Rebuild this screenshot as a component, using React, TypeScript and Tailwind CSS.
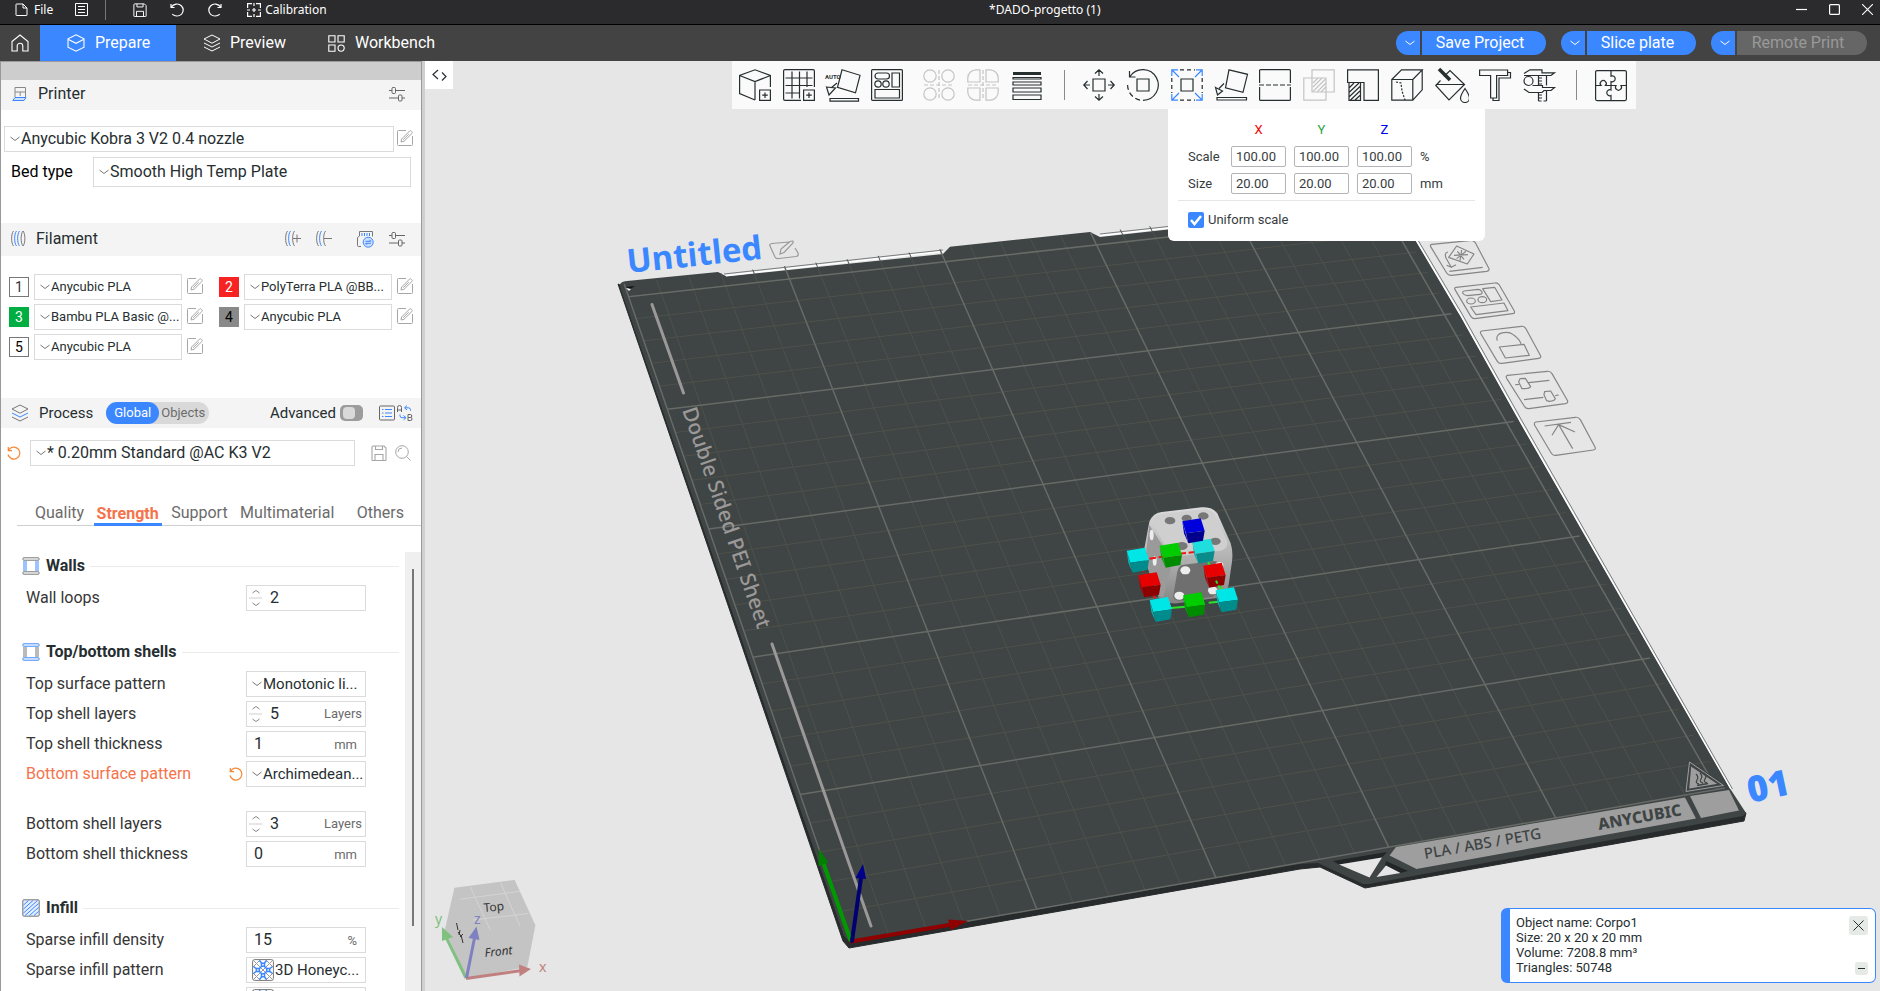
import type { ReactNode } from "react";
import clsx from "clsx";

type Point = [number, number];

type Filament = {
  slot: number;
  preset: string;
  chip: string;
};

const FILAMENTS: Filament[] = [
  { slot: 1, preset: "Anycubic PLA", chip: "border border-[#777] bg-white text-[#333]" },
  { slot: 2, preset: "PolyTerra PLA @BB...", chip: "bg-[#f72323] text-white" },
  { slot: 3, preset: "Bambu PLA Basic @...", chip: "bg-[#00ae42] text-white" },
  { slot: 4, preset: "Anycubic PLA", chip: "bg-[#898989] text-black" },
  { slot: 5, preset: "Anycubic PLA", chip: "border border-[#777] bg-white text-black" },
];

const SETTING_TABS = [
  { name: "Quality", pad: "ml-[10px]" },
  { name: "Strength", pad: "" },
  { name: "Support", pad: "" },
  { name: "Multimaterial", pad: "" },
  { name: "Others", pad: "ml-[10px]" },
];

/* ---------- icons ---------- */

function Icon({
  size = 16,
  box = 16,
  className,
  children,
}: {
  size?: number;
  box?: number;
  className?: string;
  children: ReactNode;
}) {
  return (
    <svg
      width={size}
      height={size}
      viewBox={`0 0 ${box} ${box}`}
      fill="none"
      stroke="currentColor"
      strokeWidth={1}
      className={clsx("shrink-0", className)}
      aria-hidden="true"
    >
      {children}
    </svg>
  );
}

const EditIcon = ({ size = 16 }: { size?: number }) => (
  <Icon size={size} className="text-[#a6a6a6]">
    <path d="M9 .5H1.5a1 1 0 0 0-1 1v13a1 1 0 0 0 1 1h13a1 1 0 0 0 1-1V6" />
    <path d="M4 12l.6-3L12.500 1.100c.5-.5 1.200-.5 1.700 0l.7.700c.5.500.5 1.200 0 1.700L7 11.300zM6.200 9.700l5.600-5.600" />
  </Icon>
);

const ChevronDown = ({ className }: { className?: string }) => (
  <svg width="10" height="6" viewBox="0 0 10 6" fill="none" stroke="currentColor" className={className} aria-hidden="true">
    <path d="M.5 1L5 4.500 9.500 1" />
  </svg>
);

const ResetIcon = () => (
  <Icon size={14} box={14} className="text-[#f58634]">
    <path strokeWidth={1.2} d="M1.300 1v3.600H5M1.500 4.300A6 6 0 1 1 1 8.500" />
  </Icon>
);

const UndoIcon = () => (
  <Icon size={14} box={14}>
    <path strokeWidth={1.2} d="M1 1v3.500h3.500M1.200 4.300C3.500.6 8.500-.2 11.500 3c3.200 3.500 1.500 9.500-4.300 10-2 .1-3.700-.6-4.900-1.900" />
  </Icon>
);

const RedoIcon = () => (
  <Icon size={14} box={14}>
    <path strokeWidth={1.2} d="M13 1v3.500H9.500M12.800 4.300C10.500.6 5.500-.2 2.500 3c-3.200 3.500-1.500 9.500 4.300 10 2 .1 3.700-.6 4.900-1.900" />
  </Icon>
);

const SaveIcon = ({ size = 14 }: { size?: number }) => (
  <Icon size={size}>
    <path strokeWidth={1.1} d="M1 15V2a1 1 0 0 1 1-1h11l2 2v12a.5.5 0 0 1-.5.5h-13A.5.5 0 0 1 1 15zM4.500 1v3.500h7V1M4 15.500V9.500h8v6" />
  </Icon>
);

const SlidersIcon = () => (
  <Icon className="text-[#666]">
    <path d="M0 4.500h3M6.500 4.500H16M0 12h9.500M13 12h3" />
    <rect x="3" y="1.500" width="3.500" height="6" rx="1" />
    <rect x="9.500" y="9" width="3.500" height="6" rx="1" />
  </Icon>
);

const LayersIcon = ({ size = 18, accent }: { size?: number; accent?: boolean }) => (
  <Icon size={size} box={18}>
    <path d="M9 1l8 4-8 4.200L1 5z" />
    <path stroke={accent ? "#3b87ff" : "currentColor"} d="M1 9l8 4 8-4" />
    <path d="M1 13l8 4 8-4" />
  </Icon>
);

const SpoolRings = ({ children }: { children?: ReactNode }) => (
  <Icon size={17} box={17} className="text-[#777]">
    <path d="M3.500 1C1 4 1 13 3.500 16" />
    <path stroke="#3b87ff" d="M6.500 1C4 4 4 13 6.500 16" />
    {children}
  </Icon>
);

const WallIcon = ({ caps, sides }: { caps: string; sides: string }) => (
  <Icon size={18} box={18}>
    <g stroke={caps}>
      <rect x="1" y=".8" width="16" height="2.400" rx=".5" />
      <rect x="1" y="14.800" width="16" height="2.400" rx=".5" />
    </g>
    <path stroke={sides} strokeDasharray="1 1" strokeWidth={4} d="M3 4.500v9.500M15 4.500v9.500" />
  </Icon>
);

const HatchIcon = () => (
  <Icon size={18} box={18}>
    <rect x=".8" y=".8" width="16.400" height="16.400" rx="1" fill="#e2edff" stroke="#777" />
    <path stroke="#3b87ff" d="M1.500 6l5-4.500M1.500 10L11 1.500M1.500 14L15.500 1.500M3 16.500l13.500-12M7.500 16.500l9-8M12 16.500l4.500-4" />
  </Icon>
);

const HoneycombIcon = ({ className }: { className?: string }) => (
  <svg width="22" height="22" viewBox="0 0 22 22" fill="none" className={className} aria-hidden="true">
    <rect x=".6" y=".6" width="20.800" height="20.800" rx="2" fill="#fff" stroke="#777" />
    <path stroke="#999" d="M1 1l20 20M21 1L1 21M1 8l7-7M14 1l7 7M1 14l7 7M21 14l-7 7" />
    <g stroke="#3b87ff" strokeWidth="1.500" fill="#fff">
      <path d="M9.500 4.300h3v3h-3zM9.500 14.700h3v3h-3zM4.300 9.500h3v3h-3zM14.700 9.500h3v3h-3z" />
      <path d="M7.500 1.500l2 2.500M14.500 1.500l-2 2.500M7.500 20.500l2-2.500M14.500 20.500l-2-2.500M1.500 7.500l2.500 2M1.500 14.500l2.500-2M20.500 7.500l-2.500 2M20.500 14.500l-2.500-2M7.500 9.500l2-2M14.500 9.500l-2-2M7.500 12.500l2 2M14.500 12.500l-2 2" />
    </g>
  </svg>
);

/* ---------- header ---------- */

function TitleBar() {
  return (
    <div className="flex h-[25px] shrink-0 items-center border-b border-black bg-[#2b2b2d] pb-[5px] pl-[15px] font-['Noto_Sans',sans-serif] text-[12px] text-white">
      <button type="button" className="flex items-center gap-[6px]">
        <Icon size={13} box={13}>
          <path d="M1 1.500a.5.5 0 0 1 .5-.5H8l4 4v7a.5.5 0 0 1-.5.5h-10A.5.5 0 0 1 1 12zM8 1v4h4" />
        </Icon>
        File
      </button>
      <button type="button" aria-label="Menu" className="ml-[22px]">
        <Icon size={13} box={13}>
          <path d="M.5.5h12v12H.5zM3 3.500h7M3 6.500h7M3 9.500h7" />
        </Icon>
      </button>
      <span className="ml-[17px] h-[20px] w-px bg-[#777]" />
      <button type="button" aria-label="Save" className="ml-[27px]">
        <SaveIcon />
      </button>
      <button type="button" aria-label="Undo" className="ml-[23px]">
        <UndoIcon />
      </button>
      <button type="button" aria-label="Redo" className="ml-[24px]">
        <RedoIcon />
      </button>
      <button type="button" className="ml-[25px] flex items-center gap-[4px]">
        <Icon size={14} box={14}>
          <path strokeWidth={1.2} d="M.6 5V.6H5M9 .6h4.400V5M13.400 9v4.400H9M5 13.400H.6V9M7 0v3M7 11v3M0 7h3M11 7h3M7 5v4M5 7h4" />
        </Icon>
        Calibration
      </button>
      <span className="flex-1 text-center">*DADO-progetto (1)</span>
      <div className="flex w-[117px] justify-end gap-[22px] pr-[7px]">
        <button type="button" aria-label="Minimise">
          <Icon size={11} box={11}>
            <path strokeWidth={1.2} d="M0 5.500h11" />
          </Icon>
        </button>
        <button type="button" aria-label="Maximise">
          <Icon size={11} box={11}>
            <rect x=".6" y=".6" width="9.800" height="9.800" rx="1" strokeWidth={1.2} />
          </Icon>
        </button>
        <button type="button" aria-label="Close">
          <Icon size={11} box={11}>
            <path strokeWidth={1.1} d="M0 0l11 11M11 0L0 11" />
          </Icon>
        </button>
      </div>
    </div>
  );
}

function SplitButton({ label, width, disabled }: { label: string; width: string; disabled?: boolean }) {
  return (
    <div className="flex gap-[2px]">
      <button
        type="button"
        aria-label={`${label} options`}
        className="flex h-6 w-6 items-center justify-center rounded-l-full bg-[#3b87ff] pl-1 text-white"
      >
        <ChevronDown />
      </button>
      <button
        type="button"
        disabled={disabled}
        className={clsx(
          "flex h-6 items-center justify-center rounded-r-full pr-2",
          width,
          disabled ? "bg-[#666] text-[#999]" : "bg-[#3b87ff] text-white"
        )}
      >
        {label}
      </button>
    </div>
  );
}

function NavBar() {
  return (
    <nav className="flex h-9 shrink-0 items-center bg-[#434343] pr-[13px] text-[16px] text-white">
      <button type="button" aria-label="Home" className="flex h-9 w-10 items-center justify-center">
        <Icon size={18} box={18}>
          <path strokeWidth={1.1} d="M1 7.500L9 1l8 6.500V17h-5.200v-5a2.800 2.800 0 0 0-5.600 0v5H1z" />
        </Icon>
      </button>
      <button type="button" className="flex h-9 w-[136px] items-center gap-[10px] bg-[#3b87ff] pl-[27px]">
        <Icon size={18} box={18}>
          <path strokeWidth={1.1} d="M9 .8l8 4v8.400l-8 4-8-4V4.800zM1 5.300l8 4 8-4" />
        </Icon>
        Prepare
      </button>
      <button type="button" className="flex h-9 w-[136px] items-center gap-[9px] pl-[27px]">
        <LayersIcon />
        Preview
      </button>
      <button type="button" className="flex h-9 items-center gap-[10px] pl-[16px]">
        <Icon size={17} box={17}>
          <path strokeWidth={1.1} d="M.8.8H7V7H.8zM10 .8h6.200V7H10zM.8 10H7v6.200H.8z" />
          <circle cx="13.100" cy="13.100" r="3.100" strokeWidth={1.1} />
        </Icon>
        Workbench
      </button>
      <div className="ml-auto flex gap-[15px]">
        <SplitButton label="Save Project" width="w-[124px]" />
        <SplitButton label="Slice plate" width="w-[109px]" />
        <SplitButton label="Remote Print" width="w-[130px]" disabled />
      </div>
    </nav>
  );
}

/* ---------- sidebar ---------- */

function Dropdown({ label, value, className, icon }: { label: string; value: string; className?: string; icon?: ReactNode }) {
  return (
    <div className={clsx("relative", className)}>
      <select
        aria-label={label}
        defaultValue={value}
        className={clsx(
          "h-full w-full appearance-none overflow-hidden border border-[#dbdbdb] bg-white text-[#262e30] outline-none",
          icon ? "pl-[28px]" : "pl-4"
        )}
      >
        <option value={value}>{value}</option>
      </select>
      <span className="pointer-events-none absolute inset-y-0 left-[6px] flex items-center text-[#777]">
        {icon ?? <ChevronDown />}
      </span>
    </div>
  );
}

function EditButton({ label }: { label: string }) {
  return (
    <button type="button" aria-label={`Edit ${label}`} className="pb-[2px]">
      <EditIcon />
    </button>
  );
}

function PrinterPanel() {
  return (
    <section>
      <header className="flex h-[30px] items-center bg-[#f4f4f4] pr-4 pb-[2px] pl-[11px] text-[16px] text-[#262e30]">
        <Icon className="text-[#888]">
          <path d="M3 11V1.500h10.500V11M3 6h10.500M8.200 6v4" />
          <path stroke="#3b87ff" fill="#cfe0ff" d="M3 11.500h11l-2 3H.8z" />
        </Icon>
        <h2 className="ml-[10px] flex-1">Printer</h2>
        <button type="button" aria-label="Printer settings">
          <SlidersIcon />
        </button>
      </header>
      <div className="flex h-[113px] flex-col gap-[5px] pt-4 pl-[3px]">
        <div className="flex items-center gap-[3px]">
          <Dropdown label="Printer preset" value="Anycubic Kobra 3 V2 0.4 nozzle" className="h-[26px] w-[390px] text-[16px]" />
          <EditButton label="printer" />
        </div>
        <div className="flex items-center pl-[7px]">
          <span className="w-[82px] text-[16px] text-black">Bed type</span>
          <Dropdown label="Bed type" value="Smooth High Temp Plate" className="h-[30px] w-[318px] text-[16px]" />
        </div>
      </div>
    </section>
  );
}

function FilamentPanel() {
  return (
    <section>
      <header className="flex h-[33px] items-center bg-[#f4f4f4] pr-4 pb-[2px] pl-[9px] text-[16px] text-[#262e30]">
        <SpoolRings>
          <path stroke="#3b87ff" d="M9.500 1C7 4 7 13 9.500 16" />
          <path d="M13 1c-2.500 3-2.500 12 0 15 2.500-3 2.500-12 0-15z" />
        </SpoolRings>
        <h2 className="ml-[9px] flex-1">Filament</h2>
        <button type="button" aria-label="Add filament">
          <SpoolRings>
            <path d="M10.500 1C8 4 8 13 10.500 16M9 8.500h8M13 4.500v8" />
          </SpoolRings>
        </button>
        <button type="button" aria-label="Remove filament" className="ml-[14px]">
          <SpoolRings>
            <path d="M10.500 1C8 4 8 13 10.500 16M9 8.500h8" />
          </SpoolRings>
        </button>
        <button type="button" aria-label="Sync filaments" className="ml-[24px]">
          <Icon size={18} box={18} className="text-[#777]">
            <path d="M5 16.500H2.500a1 1 0 0 1-1-1v-8l2-1.500V1.500h13v5" />
            <path stroke="#3b87ff" d="M6 3v3M8.500 3v3M11 3v3M13.500 3v3" />
            <circle cx="12.200" cy="12.200" r="5" stroke="#3b87ff" fill="#cfe0ff" />
            <path stroke="#3b87ff" d="M9.500 11.300h5.400l-1.500-1.500M14.900 13.300H9.500l1.500 1.500" />
          </Icon>
        </button>
        <button type="button" aria-label="Filament settings" className="ml-[15px]">
          <SlidersIcon />
        </button>
      </header>
      <ul className="grid h-[142px] grid-cols-[210px_210px] content-start gap-y-1 pt-[18px] pl-2">
        {FILAMENTS.map((item) => (
          <li key={item.slot} className="flex w-[204px] items-center text-[13px]">
            <span className={clsx("flex h-5 w-5 items-center justify-center text-[14px]", item.chip)}>{item.slot}</span>
            <Dropdown label={`Filament ${item.slot}`} value={item.preset} className="mr-[5px] ml-[5px] h-[26px] w-[148px]" />
            <EditButton label={`filament ${item.slot}`} />
          </li>
        ))}
      </ul>
    </section>
  );
}

function ProcessPanel() {
  return (
    <section>
      <header className="flex h-[30px] items-center bg-[#f4f4f4] pr-2 pl-[10px] text-[15px] text-[#262e30]">
        <span className="text-[#777]">
          <LayersIcon accent />
        </span>
        <h2 className="ml-[10px]">Process</h2>
        <div className="ml-[13px] flex h-[22px] w-[103px] rounded-full bg-[#d9d9d9] text-[14px]">
          <button type="button" className="w-[53px] rounded-full bg-[#3b87ff] text-[13px] text-white">
            Global
          </button>
          <button type="button" className="w-[48px] text-[13px] text-[#6b6b6b]">
            Objects
          </button>
        </div>
        <label htmlFor="advanced" className="ml-auto">
          Advanced
        </label>
        <span className="relative ml-1 flex h-4 w-[23px] items-center">
          <input id="advanced" type="checkbox" role="switch" className="h-4 w-[23px] appearance-none rounded-[5px] bg-[#9c9c9c]" />
          <span className="pointer-events-none absolute left-[3px] h-3 w-3 rounded-[4px] bg-[#d9d9d9]" />
        </span>
        <button type="button" aria-label="Process table" className="ml-4">
          <Icon className="text-[#666]">
            <rect x=".5" y="1" width="15" height="14" rx="1" />
            <path stroke="#3b87ff" d="M3 4.500h1.500M6 4.500h7M3 8h1.500M6 8h7M3 11.500h1.500M6 11.500h7" />
          </Icon>
        </button>
        <button type="button" aria-label="Compare presets" className="ml-[2px]">
          <Icon className="text-[#666]">
            <path d="M.5 7V2.500a2 2 0 0 1 4 0V7M.5 5h4M11 9.500v6h2.500a1.500 1.500 0 0 0 0-3H11h2.300a1.500 1.500 0 0 0 0-3z" />
            <path stroke="#3b87ff" d="M10 .5L7.500 2.800 10 5M8 2.800h3.500a2 2 0 0 1 2 2v1M6.500 10.500L9 12.700l-2.500 2.200M8.500 12.700H5a2 2 0 0 1-2-2V9.500" />
          </Icon>
        </button>
      </header>

      <div className="flex items-center pt-3 pl-[6px]">
        <button type="button" aria-label="Reset process preset">
          <ResetIcon />
        </button>
        <Dropdown label="Process preset" value="* 0.20mm Standard @AC K3 V2" className="ml-[9px] h-[26px] w-[325px] text-[16px]" />
        <button type="button" aria-label="Save preset" className="ml-4 text-[#a6a6a6]">
          <SaveIcon size={16} />
        </button>
        <button type="button" aria-label="Search settings" className="ml-2 text-[#a6a6a6]">
          <Icon>
            <circle cx="7" cy="7" r="6.300" />
            <path d="M11.500 11.500L15.500 15.500M3 7a4 4 0 0 1 4-4" />
          </Icon>
        </button>
      </div>

      <div role="tablist" className="mt-[31px] ml-4 flex h-[29px] justify-between border-b border-[#cfcfcf] pr-[14px] pl-[5px] text-[16px] text-[#6b6b6b]">
        {SETTING_TABS.map((tab) => (
          <button
            key={tab.name}
            type="button"
            role="tab"
            aria-selected={tab.name === "Strength"}
            className={clsx(
              "h-[29px] px-[3px] pt-[2px]",
              tab.pad,
              tab.name === "Strength" && "border-b-3 border-[#3b87ff] pt-[5px] font-bold text-[#f5734b]"
            )}
          >
            {tab.name}
          </button>
        ))}
      </div>
    </section>
  );
}

function GroupHeading({ icon, title }: { icon: ReactNode; title: string }) {
  return (
    <div className="flex h-[34px] items-center pl-[21px]">
      {icon}
      <h3 className="mr-[5px] ml-[6px] text-[16px] font-bold text-[#262e30]">{title}</h3>
      <span className="h-px flex-1 bg-[#ebebeb]" />
    </div>
  );
}

function SettingRow({ id, label, changed, children }: { id?: string; label: string; changed?: boolean; children: ReactNode }) {
  return (
    <div className="flex h-[30px] items-center pl-[25px] text-[16px]">
      <label htmlFor={id} className={clsx("w-[203px]", changed ? "text-[#f5734b]" : "text-[#363636]")}>
        {label}
      </label>
      <span className="flex w-[17px] shrink-0 items-center">
        {changed && (
          <button type="button" aria-label={`Reset ${label}`}>
            <ResetIcon />
          </button>
        )}
      </span>
      {children}
    </div>
  );
}

function NumberRow({ id, label, value, unit, spinner }: { id: string; label: string; value: string; unit?: string; spinner?: boolean }) {
  return (
    <SettingRow id={id} label={label}>
      <div className="flex h-[26px] w-[120px] items-center border border-[#dbdbdb] bg-white">
        {spinner && (
          <svg width="13" height="18" viewBox="0 0 13 18" fill="none" stroke="#888" className="ml-[2px] shrink-0" aria-hidden="true">
            <path d="M3.500 4L7 1.500 10.500 4M3.500 14L7 16.500l3.500-2.500" />
            <path stroke="#cfcfcf" d="M0 9h13" />
          </svg>
        )}
        <input
          id={id}
          type="text"
          defaultValue={value}
          className={clsx("w-full min-w-0 text-[16px] text-[#262e30] outline-none", spinner ? "pl-2" : "pl-[7px]")}
        />
        {unit && (
          <span className={clsx("text-[13px] text-[#6b6b6b]", unit === "Layers" ? "pr-[3px]" : "pt-[2px] pr-[8px]")}>
            {unit}
          </span>
        )}
      </div>
    </SettingRow>
  );
}

function SelectRow({ label, value, changed, icon }: { label: string; value: string; changed?: boolean; icon?: ReactNode }) {
  return (
    <SettingRow label={label} changed={changed}>
      <Dropdown label={label} value={value} icon={icon} className="h-[26px] w-[120px] text-[15px]" />
    </SettingRow>
  );
}

function SettingsList() {
  return (
    <div className="flex min-h-0 flex-1 overflow-hidden">
      <div className="flex-1 pt-[23px] pr-[6px]">
        <div className="mb-[22px]">
          <GroupHeading icon={<WallIcon caps="#777" sides="#3b87ff" />} title="Walls" />
          <NumberRow id="wall-loops" label="Wall loops" value="2" spinner />
        </div>
        <div className="mb-[22px]">
          <GroupHeading icon={<WallIcon caps="#3b87ff" sides="#777" />} title="Top/bottom shells" />
          <SelectRow label="Top surface pattern" value="Monotonic li..." />
          <NumberRow id="top-layers" label="Top shell layers" value="5" unit="Layers" spinner />
          <NumberRow id="top-thickness" label="Top shell thickness" value="1" unit="mm" />
          <SelectRow label="Bottom surface pattern" value="Archimedean..." changed />
          <div className="pt-5">
            <NumberRow id="bottom-layers" label="Bottom shell layers" value="3" unit="Layers" spinner />
            <NumberRow id="bottom-thickness" label="Bottom shell thickness" value="0" unit="mm" />
          </div>
        </div>
        <GroupHeading icon={<HatchIcon />} title="Infill" />
        <NumberRow id="infill-density" label="Sparse infill density" value="15" unit="%" />
        <SelectRow label="Sparse infill pattern" value="3D Honeyc..." icon={<HoneycombIcon />} />
        <SelectRow label="" value=" " icon={<HoneycombIcon />} />
      </div>
      <div className="mt-[26px] w-4 bg-[#efefef] pt-[17px]">
        <div className="ml-[7px] h-[357px] w-[2px] bg-[#777]" />
      </div>
    </div>
  );
}

function Sidebar() {
  return (
    <aside className="flex w-[425px] shrink-0 border-l border-[#999] bg-[#cfcfcf]">
      <div className="flex min-w-0 flex-1 flex-col border-t border-r border-[#9a9a9a] bg-white">
        <div className="h-[18px] shrink-0 bg-[#cdcdcd]" />
        <PrinterPanel />
        <FilamentPanel />
        <ProcessPanel />
        <SettingsList />
      </div>
      <div className="w-[3px]" />
    </aside>
  );
}

/* ---------- 3D scene ---------- */

// Maps a bed position, in 50 mm cells counted from the rear left corner, to the screen
function project(u: number, v: number): Point {
  const s = u / 5;
  const t = v / 5;
  const w = 1 + 0.07786 * s - 0.15516 * t;
  return [(628.6 + 865.3 * s + 90.36 * t) / w, (296.7 - 67.1 * s + 498.9 * t) / w];
}

function gridPath(major: boolean): string {
  let d = "";
  for (let i = 0; i <= 25; i++) {
    if ((i % 5 === 0) !== major) continue;
    const k = i / 5;
    const ends: [Point, Point][] = [
      [project(k, -0.12), project(k, 5)],
      [project(0, k), project(5.05, k)],
    ];
    for (const [a, b] of ends) {
      d += `M${a[0].toFixed(1)} ${a[1].toFixed(1)}L${b[0].toFixed(1)} ${b[1].toFixed(1)}`;
    }
  }
  return d;
}

const HANDLES = [
  { at: [113, 240], top: "#00e6e6", front: "#008c8c", side: "#00b4b4" },
  { at: [310, 213], top: "#1fdede", front: "#0b8c8c", side: "#00b4b4" },
  { at: [148, 314], top: "#e60000", front: "#8c0000", side: "#b40000" },
  { at: [343, 285], top: "#e60000", front: "#8c0000", side: "#b40000" },
  { at: [212, 225], top: "#00cc00", front: "#008c00", side: "#00a800" },
  { at: [182, 388], top: "#00e6e6", front: "#008c8c", side: "#00b4b4" },
  { at: [380, 359], top: "#00e6e6", front: "#008c8c", side: "#00b4b4" },
  { at: [282, 374], top: "#00cc00", front: "#008c00", side: "#00a800" },
  { at: [280, 152], top: "#0000dc", front: "#00008c", side: "#0000b4" },
];

function Dice() {
  return (
    <g transform="translate(1100 480) scale(.3333)">
      <path
        d="M148 125Q158 100 185 96L305 82Q338 80 352 100L392 190Q400 215 396 245L386 315Q380 345 350 354L232 370Q190 372 176 352L134 240Q130 220 134 200z"
        fill="url(#dice-body)"
      />
      <path d="M158 130Q160 106 185 102L305 88Q332 84 344 104L380 180Q388 205 362 212L240 228Q212 230 200 205z" fill="#cfcfcf" />
      <path d="M148 135L200 215Q215 240 212 270L190 352Q176 350 172 340L136 240z" fill="#9a9a9a" />
      <path d="M246 255L342 243Q366 244 362 270L350 335Q346 350 330 352L240 362Q216 362 220 345L232 275Q236 258 246 255z" fill="#6f6f6f" />
      <g fill="#777">
        <ellipse cx="210" cy="122" rx="16" ry="11" />
        <ellipse cx="260" cy="115" rx="15" ry="11" />
        <ellipse cx="310" cy="108" rx="16" ry="11" />
        <ellipse cx="246" cy="198" rx="17" ry="12" />
        <ellipse cx="346" cy="184" rx="16" ry="11" />
      </g>
      <g fill="#ededed">
        <ellipse cx="256" cy="271" rx="15" ry="12" />
        <ellipse cx="238" cy="347" rx="15" ry="12" />
        <ellipse cx="338" cy="331" rx="14" ry="12" />
        <ellipse cx="358" cy="255" rx="12" ry="9" />
        <ellipse cx="155" cy="165" rx="6" ry="16" />
        <ellipse cx="164" cy="243" rx="6" ry="14" />
      </g>
      <path d="M148 236L190 230M238 221L286 216M120 258L136 284M156 338L174 370" stroke="#f01414" strokeWidth="6" strokeDasharray="20 8" />
      <path d="M318 232L334 266M212 384L256 380M326 368L356 365M350 300L366 330" stroke="#2ce02c" strokeWidth="6" />
      {HANDLES.map(({ at: [x, y], top, front, side }) => (
        <g key={`${x}-${y}`} transform={`translate(${x} ${y})`}>
          <path d="M-33-28L-23 8L-15 38L-28 8z" fill={side} />
          <path d="M-33-28L22-37L34 0L-22 8z" fill={top} />
          <path d="M-22 8L34 0L29 30L-15 38z" fill={front} />
        </g>
      ))}
      <path d="M348 302L360 326" stroke="#2ce02c" strokeWidth="6" strokeDasharray="10 6" />
    </g>
  );
}

function PlateIcons() {
  return (
    <g transform="translate(1380 210) scale(.3333)" fill="none" stroke="#858585" strokeWidth="3.500" strokeLinejoin="round">
      <path d="M156 103L268 92Q280 90 286 98L326 174Q330 182 320 184L215 196Q205 197 200 189L152 110Q149 104 156 103z" />
      <path d="M230 108L282 132L262 162L206 142zM222 136L264 134M232 124L252 148M245 120L240 152M230 146L258 124M204 126Q192 128 198 144L214 172M200 166L214 172L228 164M208 184L308 172" />
      <path d="M228 232L345 219Q353 218 358 225L403 303Q406 310 398 311L285 326Q278 327 273 320L225 239Q222 233 228 232z" />
      <path d="M252 243L294 238Q302 238 306 246Q308 252 300 253L262 257Q252 256 248 249Q247 244 252 243zM308 236L344 232L366 270L332 275zM272 291L372 279L384 302L288 314z" />
      <ellipse cx="273" cy="273" rx="13" ry="9" />
      <ellipse cx="307" cy="269" rx="13" ry="9" />
      <path d="M305 363L424 349Q432 348 437 355L481 436Q485 444 476 445L366 460Q357 462 352 454L303 372Q299 364 305 363z" />
      <path d="M358 411L432 403L448 436L376 444zM352 392C342 366 384 362 400 374Q418 386 424 403" />
      <path d="M383 496L502 484Q511 483 516 491L562 571Q566 579 556 581L447 596Q438 597 433 589L380 505Q376 498 383 496z" />
      <path d="M406 524L417 523M446 518L508 511M432 569L490 562M526 557L536 555M420 506L436 505L452 530Q448 536 434 536L426 536L416 516zM494 545L512 543L526 566Q524 573 508 574L500 572L492 554z" />
      <path d="M468 636L586 622Q596 621 601 629L645 711Q649 719 640 720L528 736Q519 738 514 730L464 646Q461 638 468 636z" />
      <path d="M494 648L573 637M578 716L536 644L516 676M536 644L585 666" />
    </g>
  );
}

function AxisArrows() {
  return (
    <g strokeWidth="4" strokeLinecap="round">
      <path d="M851 941.500L952 924.500" stroke="#8f0000" />
      <path d="M948 919.500L968 921L951 930z" fill="#8f0000" />
      <path d="M850.500 940L823 862" stroke="#009a00" />
      <path d="M819 849L828.500 862.500L818.500 866z" fill="#008000" />
      <path d="M852 941L861 878" stroke="#00006e" />
      <path d="M863 864L866 879L855.500 878z" fill="#00008a" />
    </g>
  );
}

function ViewCube() {
  return (
    <g className="font-['Noto_Sans',sans-serif]">
      <path d="M454.400 887.700L514.700 880L535.400 925.300L527.300 967L466 978.300L445 929.300z" fill="#c4c4c4" />
      <path d="M459.600 899.300L520 891.300M470 886.500L490.300 930M500.300 882.500L520 926M473 920L528 913.600" stroke="#d4d4d4" fill="none" />
      <text x="484" y="912" fontSize="12" fill="#333" transform="rotate(-5 484 912)">
        Top
      </text>
      <text x="485" y="957" fontSize="12" fontStyle="italic" fill="#333" transform="rotate(-6 485 957)">
        Front
      </text>
      <path d="M456.500 923l1.500 7M458 932l3 4M460 930l-1 5M461 935l2 8M463 934l-3 3" stroke="#333" fill="none" />
      <g strokeWidth="3">
        <path d="M466 978.500L522 970.500" stroke="#c08080" />
        <path d="M519 964.500L531 969L519.500 976.500z" fill="#c08080" />
        <path d="M466 978L446.500 938" stroke="#80c080" />
        <path d="M442 927L453 937L442 941z" fill="#80c080" />
        <path d="M466.500 978L474.500 938" stroke="#8080c0" />
        <path d="M476.500 926.500L479.500 940L468.500 938z" fill="#8080c0" />
      </g>
      <g fontSize="14">
        <text x="435" y="924" fill="#80c080">y</text>
        <text x="474" y="924" fill="#8080c0">z</text>
        <text x="539" y="972" fill="#c08080">x</text>
      </g>
    </g>
  );
}

function Scene() {
  return (
    <svg viewBox="425 61 1455 930" preserveAspectRatio="xMinYMin slice" className="absolute inset-0 h-full w-full" role="img" aria-label="Build plate">
      <defs>
        <linearGradient id="dice-body" x1="0" y1="0" x2="0" y2="1">
          <stop offset="0" stopColor="#dcdcdc" />
          <stop offset=".5" stopColor="#b4b4b4" />
          <stop offset="1" stopColor="#858585" />
        </linearGradient>
      </defs>

      {/* underside, then the top face of the sheet */}
      <path d="M618 284L843 941L849 948L1300 869L1320 867L1365 888L1744 821L1746 813z" fill="#272b2b" stroke="#272b2b" strokeLinejoin="round" />
      <path
        d="M620 286Q619 282 627 281L718 272L726.500 276.500L943 254L950 246.700L1090 232L1100 237L1391 205L1416.700 242L1460 315L1520 422L1731 790L1746 813L1743 816L1369 884L1363 884L1318 863L1300 864L850 942L844 936L621 290z"
        fill="#3f4444"
      />
      <path d="M726 275.500L943 251.500M1100 235.500L1391 203.500L1416.700 241L1460 314L1520 421L1731 789" fill="none" stroke="#fff" strokeWidth="1.500" />
      <path d="M724 274L943 250M1100 234L1391 202L1418.500 241L1461.500 313L1521.500 420L1732.500 789" fill="none" stroke="#5a5f5f" strokeWidth=".8" />
      <path d={gridPath(false)} stroke="#4e524b" fill="none" />
      <path d={gridPath(true)} stroke="#666b66" strokeWidth="1.500" fill="none" />
      <path d="M626 287L635 286L630 289z" fill="#111" />
      <path d="M626 288L631 289L629 291z" fill="#fff" />

      {/* sheet markings */}
      <path d="M652 304.500L683.500 393M772 644L871 926" stroke="#9b9898" strokeWidth="3" strokeLinecap="round" />
      <text x="682" y="410" fontSize="21" fontWeight="500" fill="#9b9898" transform="rotate(71 682 410)" className="font-['Noto_Sans',sans-serif]">
        Double Sided PEI Sheet
      </text>
      <path d="M1396 847L1685 797.500L1696 818.500L1416.500 869L1389.500 855.500z" fill="#9e9e9e" />
      <path d="M1690 796L1729 790L1739 810.500L1701 818z" fill="#9e9e9e" />
      <path d="M1333 861L1387 852L1382 857.500L1339 864.500zM1386 861L1408 871L1400.500 873L1385 866z" fill="#222626" />
      <path d="M1339 864.500L1382 857.500L1369.500 877.500zM1386 865.500L1400.500 873L1376.500 877z" fill="#e6e6e6" />
      <path d="M1689.500 763L1722.500 785L1687 791z" fill="#9e9e9e" stroke="#3f4444" strokeWidth="4" />
      <path d="M1689.500 762L1723.500 785.500L1686 791.500z" fill="none" stroke="#9e9e9e" />
      <path d="M1696 774q3 3 1 6t2 4M1700 773q3 3 1 6t2 4M1704 773q3 3 1 6t2 4M1697 785.500l11-2" fill="none" stroke="#3f4444" strokeWidth="1.300" />
      <g className="font-['Noto_Sans',sans-serif]" fill="#3f4444">
        <text x="1425" y="859" fontSize="15" fontWeight="500" transform="rotate(-10 1425 859)">
          PLA / ABS / PETG
        </text>
        <text x="1599" y="830" fontSize="16" fontWeight="800" transform="rotate(-10 1599 830)">
          ANYCUBIC
        </text>
      </g>

      {/* plate name and number */}
      <g fill="#3b87ff" className="font-['Open_Sans',sans-serif]" fontWeight="700">
        <text x="628" y="273" fontSize="33" transform="rotate(-6 628 273)">
          Untitled
        </text>
        <text x="1750" y="803" fontSize="36" fontWeight="800" transform="rotate(-12 1750 803)">
          01
        </text>
      </g>
      <path
        d="M789 242L772 243.500Q769 244 770 246L775 257Q776 259 779 258.500L796 256.500Q799 256 798 253L795 248M780 254L781 249L790 241.500Q794 240 793 243L784 252.500z"
        fill="none"
        stroke="#999"
        strokeWidth="1.200"
      />
      <PlateIcons />
      <Dice />
      <AxisArrows />
      <ViewCube />
    </svg>
  );
}

/* ---------- viewport tools ---------- */

function ToolButton({ label, muted, children }: { label: string; muted?: boolean; children: ReactNode }) {
  return (
    <button
      type="button"
      aria-label={label}
      disabled={muted}
      className={clsx("flex h-12 w-11 items-center justify-center", muted ? "text-[#c4c4c4]" : "text-[#262e30]")}
    >
      <svg width="36" height="36" viewBox="-2 -2 36 36" fill="none" stroke="currentColor" strokeWidth="1.200" aria-hidden="true">
        {children}
      </svg>
    </button>
  );
}

function Toolbar() {
  return (
    <div role="toolbar" className="absolute top-0 left-[307px] flex h-12 items-center bg-[#fafafa] pr-[3px] pl-px">
      <ToolButton label="Add model">
        <path d="M16 31L.6 24.500V6.500L16 .8l15.400 5.700V18M.6 6.500L16 12.500l15.400-6M16 12.500V31M20.600 21h10.800v10.400H20.600zM26 23.500v5.500M23.200 26.200h5.600" />
      </ToolButton>
      <ToolButton label="Add plate">
        <path d="M18 31.400H2a1.400 1.400 0 0 1-1.400-1.400V2A1.400 1.400 0 0 1 2 .6h28A1.400 1.400 0 0 1 31.400 2v16M2.500 9h27M2.500 16.500h27M2.500 24H17M9 2.500v27M16.500 2.500v27M24 2.500V18M20.600 21h10.800v10.400H20.600zM26 23.500v5.500M23.200 26.200h5.600" />
      </ToolButton>
      <ToolButton label="Auto orient">
        <path d="M15 .8l18 5.500-4.500 17.500-18-5.500zM3 29.500h28.500v2.700H3zM-.5 18l9 1-6.500 7zM10 14L4 19" />
        <text x="-2" y="10" fontSize="6" fontWeight="700" fill="currentColor" stroke="none">
          AUTO
        </text>
      </ToolButton>
      <ToolButton label="Arrange">
        <rect x=".6" y=".6" width="30.800" height="30.800" rx="1" />
        <rect x="4" y="4" width="14.500" height="6" rx="3" />
        <circle cx="7" cy="15" r="3.200" />
        <circle cx="15" cy="15" r="3.200" />
        <path d="M21 4h7.500v14H21zM4 20.500h24.500v8.500H4z" />
      </ToolButton>
      <span className="w-2" />
      <ToolButton label="Split to objects" muted>
        <circle cx="7" cy="7" r="6.200" />
        <circle cx="25" cy="7" r="6.200" />
        <circle cx="7" cy="25" r="6.200" />
        <circle cx="25" cy="25" r="6.200" />
        <path strokeDasharray="4 2" d="M16 1v30M1 16h30" />
      </ToolButton>
      <ToolButton label="Split to parts" muted>
        <path d="M13 .8v12.200H.8V9A8.200 8.200 0 0 1 9 .8zM19 .8v12.200h12.200V9A8.200 8.200 0 0 0 23 .8zM13 31.200V19H.8v4A8.200 8.200 0 0 0 9 31.200zM19 31.200V19h12.200v4a8.200 8.200 0 0 1-8.200 8.200z" />
        <path strokeDasharray="4 2" d="M16 1v30M1 16h30" />
      </ToolButton>
      <ToolButton label="Variable layer height">
        <path d="M2 4.500h28" strokeWidth="3" />
        <path d="M2 8.500h28v1.500H2zM2 13h28v3H2zM2 19h28v4H2zM2 26h28v4.500H2z" />
      </ToolButton>
      <span className="mr-3 ml-[15px] h-[30px] w-px bg-[#8a8a8a]" />
      <ToolButton label="Move">
        <path d="M10 10h12v12H10zM16 7V1M12 4.500L16 .8l4 3.700M16 25v6M12 27.500l4 3.700 4-3.700M7 16H1M4.500 12L.8 16l3.700 4M25 16h6M27.500 12l3.700 4-3.700 4" />
      </ToolButton>
      <ToolButton label="Rotate">
        <path d="M10 10h12v12H10zM3 7.500A15.400 15.400 0 1 1 16 31.400M2.500 2v6h6" />
        <path strokeDasharray="5 3" d="M.6 16A15.400 15.400 0 0 0 16 31.400" />
      </ToolButton>
      <ToolButton label="Scale">
        <path d="M10 10h12v12H10z" />
        <path strokeDasharray="4 3" d="M9 .8h15M9 31.200h15M.8 9v15M31.200 9v15" />
        <path stroke="#3b87ff" d="M.8 7V.8H7M1 1l7 7M25 .8h6.200V7M31 1l-7 7M.8 25v6.200H7M1 31l7-7M31.200 25v6.200H25M31 31l-7-7" />
      </ToolButton>
      <ToolButton label="Lay on face">
        <path d="M14 .8l18.500 4.500-4.500 18-17.500-4.500zM2 28.500h29.500v2.500H2zM.5 18.500l7 3.500-5 4zM9 14.500l-5 5" />
      </ToolButton>
      <ToolButton label="Cut">
        <path d="M.6 14V1.600a1 1 0 0 1 1-1h28.800a1 1 0 0 1 1 1V14M.6 18v12.400a1 1 0 0 0 1 1h28.800a1 1 0 0 0 1-1V18" />
        <path strokeDasharray="5 2" d="M0 16h32" />
      </ToolButton>
      <ToolButton label="Boolean" muted>
        <path d="M9 .8h22.200v22.200H9zM.8 9h22.200v22.200H.8z" />
        <path d="M10 14l5-5M10 18l9-9M10 22.500L22.500 10M14 23l9-9M18 23l5-5" />
      </ToolButton>
      <ToolButton label="Support painting">
        <path d="M.6.8h30.800v30.600H17V13.500H.6z" />
        <path d="M2 14v17.400h11.500V14M2 19l5-5M2 23.500L12 14M2 28l11.500-11M3.500 31l10-9.500M8 31l5.500-5" />
      </ToolButton>
      <ToolButton label="Seam painting">
        <path d="M.8 10.500h21v20.700h-21zM.8 10.500L10.500.8h20.700l-9.400 9.700M31.200.8v20l-9.400 10.400" />
        <path strokeDasharray="2 1.500" d="M5 13l5 1 1 8 3 9" />
      </ToolButton>
      <ToolButton label="Color painting">
        <path d="M9 7.500L15 1.500 29.500 15.500 14 31 .8 16.500 5.500 11.500M.8 15.500H29" />
        <path d="M30 19.500c-3 4.500-4.500 7-4.500 9.500a4.500 4.500 0 0 0 9 0c0-2.500-1.500-5-4.500-9.500z" fill="#fafafa" />
        <path strokeWidth="3.500" d="M4 0l11 11" />
      </ToolButton>
      <ToolButton label="Text">
        <path d="M.6 1h28v5.500h-11V29h-6V6.500H.6zM29 3.500h2.500V9H20v22.500h-6V29" />
      </ToolButton>
      <ToolButton label="Measure">
        <path d="M1 4.500L7 .8h12v3h12.500L28 6.500H19.500H1M1 20l5 3.500h13l2-2h7l3.500-3h-12v-2H9.500M15.500 6.500v10M23.500 6.500v10M15.500 23.500V32M23.500 21.500V32M16 9h3M16 12h3M16 15h3M16 26h3M16 29h3M15.500 32h3M20.500 32h3" />
        <circle cx="5.500" cy="12" r="4.500" />
      </ToolButton>
      <span className="mr-3 ml-[15px] h-[30px] w-px bg-[#8a8a8a]" />
      <ToolButton label="Assembly">
        <rect x=".6" y="1.600" width="30.800" height="30" rx="1.500" />
        <path d="M16 1.600v5.500a3 3 0 1 1 0 5.500V16.500M.6 16.500H6a3 3 0 1 1 4.500 0H21a3 3 0 1 0 5 0h5.400M16 16.500V21a3 3 0 1 0 0 5.500V31.600" />
      </ToolButton>
    </div>
  );
}

const SCALE_ROWS = [
  { name: "Scale", value: "100.00", unit: "%" },
  { name: "Size", value: "20.00", unit: "mm" },
];

function ScalePanel() {
  return (
    <div className="absolute top-12 left-[743px] h-[132px] w-[317px] rounded-b-md bg-white px-[10px] pt-[11px] text-[13px] text-[#363c3e]">
      <div className="grid grid-cols-[35px_55px_55px_55px_40px] items-center gap-x-2 gap-y-[6px] pl-[10px]">
        <span />
        <span className="h-5 text-center text-[#f00000]">X</span>
        <span className="h-5 text-center text-[#1fa544]">Y</span>
        <span className="h-5 text-center text-[#0000f0]">Z</span>
        <span />
        {SCALE_ROWS.map((row) => [
          <span key={row.name}>{row.name}</span>,
          ...["X", "Y", "Z"].map((axis) => (
            <input
              key={row.name + axis}
              type="text"
              aria-label={`${row.name} ${axis}`}
              defaultValue={row.value}
              className="h-[21px] w-full rounded-[2px] border border-[#b4b4b8] pl-1 outline-none"
            />
          )),
          <span key={row.unit}>{row.unit}</span>,
        ])}
      </div>
      <div className="mt-[6px] border-t border-[#e6e6e6] pt-[9px] pl-[10px]">
        <label className="flex items-center gap-1">
          <span className="relative flex h-4 w-4">
            <input type="checkbox" defaultChecked className="h-4 w-4 appearance-none rounded-[2px] bg-[#3b87ff]" />
            <svg viewBox="0 0 16 16" fill="none" stroke="#fff" strokeWidth="2.500" className="pointer-events-none absolute inset-0" aria-hidden="true">
              <path d="M3 8l3.500 4L13 4" />
            </svg>
          </span>
          Uniform scale
        </label>
      </div>
    </div>
  );
}

function ObjectInfo() {
  return (
    <div className="absolute right-1 bottom-2 flex h-[75px] w-[375px] justify-between rounded-md border border-l-[9px] border-[#3b87ff] bg-white pt-[6px] pr-[7px] pl-[6px] text-[13px] leading-[15px] text-[#262e30]">
      <div>
        <p>Object name: Corpo1</p>
        <p>Size: 20 x 20 x 20 mm</p>
        <p>Volume: 7208.8 mm³</p>
        <p>Triangles: 50748</p>
      </div>
      <div className="flex flex-col items-end justify-between pt-[1px] pb-[7px]">
        <button type="button" aria-label="Close" className="flex h-[19px] w-[19px] items-center justify-center rounded-[3px] bg-[#e6eae7]">
          <Icon size={11} box={11}>
            <path d="M.5.5l10 10M10.500.5l-10 10" />
          </Icon>
        </button>
        <button type="button" aria-label="Collapse" className="flex h-[13px] w-[13px] items-center justify-center rounded-[3px] bg-[#e6eae7]">
          <Icon size={7} box={7}>
            <path d="M0 3.500h7" />
          </Icon>
        </button>
      </div>
    </div>
  );
}

function Viewport() {
  return (
    <main className="relative min-w-0 flex-1 overflow-hidden bg-[#e6e6e6]">
      <Scene />
      <button type="button" aria-label="Toggle sidebar" className="absolute top-0 left-0 flex h-[28px] w-[28px] items-center justify-center bg-white text-[#262e30]">
        <Icon size={15} box={15}>
          <path strokeWidth={1.2} d="M6 2L1 6.500 6 11M10 4.500l4 4-4 4" />
        </Icon>
      </button>
      <Toolbar />
      <ScalePanel />
      <ObjectInfo />
    </main>
  );
}

export default function App() {
  return (
    <div className="flex h-screen flex-col overflow-hidden bg-[#e6e6e6] font-['Roboto','Noto_Sans',sans-serif]">
      <TitleBar />
      <NavBar />
      <div className="flex min-h-0 flex-1">
        <Sidebar />
        <Viewport />
      </div>
    </div>
  );
}
